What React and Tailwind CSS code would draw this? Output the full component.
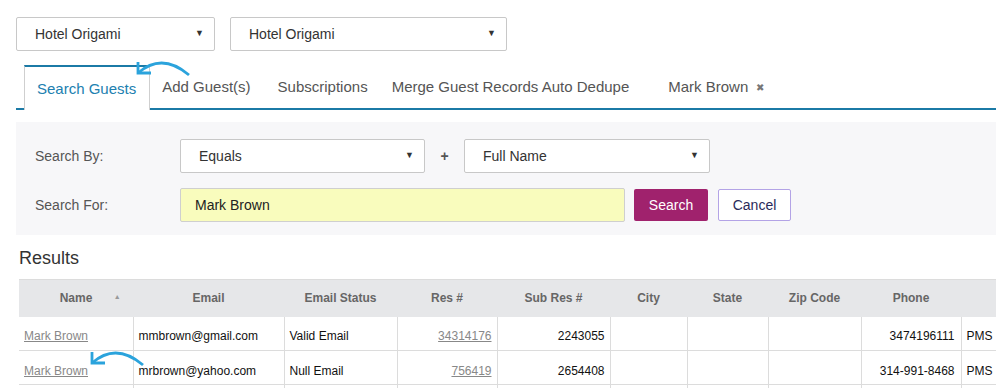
import React from 'react';

const FakeSelect = ({ value, className }) => (
  <div className={`flex items-center justify-between bg-white border border-[#c8c8c8] rounded-[2px] h-[34px] pl-[18px] pr-[10px] text-[14px] text-[#333] ${className}`}>
    <span>{value}</span>
    <span className="text-[9px] text-[#333]">▼</span>
  </div>
);

const Arrow = ({ className }) => (
  <svg className={`absolute pointer-events-none ${className}`} width="60" height="22" viewBox="0 0 60 22" fill="none">
    <path d="M2 12 Q 26 -9 53 14" stroke="#2ba3dc" strokeWidth="2.8" fill="none" />
    <path d="M2 1 L2 12 L15 12" stroke="#2ba3dc" strokeWidth="2.8" fill="none" />
  </svg>
);

const cols = [
  { label: 'Name', w: 'w-[114px]' },
  { label: 'Email', w: 'w-[151px]' },
  { label: 'Email Status', w: 'w-[113px]' },
  { label: 'Res #', w: 'w-[100px]' },
  { label: 'Sub Res #', w: 'w-[113px]' },
  { label: 'City', w: 'w-[77px]' },
  { label: 'State', w: 'w-[81px]' },
  { label: 'Zip Code', w: 'w-[93px]' },
  { label: 'Phone', w: 'w-[100px]' },
  { label: '', w: 'w-[60px]' },
];

const rows = [
  { name: 'Mark Brown', email: 'mmbrown@gmail.com', status: 'Valid Email', res: '34314176', sub: '2243055', phone: '3474196111', src: 'PMS' },
  { name: 'Mark Brown', email: 'mrbrown@yahoo.com', status: 'Null Email', res: '756419', sub: '2654408', phone: '314-991-8468', src: 'PMS' },
  { name: '', email: '', status: '', res: '', sub: '', phone: '', src: '' },
];

export default function App() {
  return (
    <div className="relative w-[996px] h-[388px] overflow-hidden bg-white font-['Liberation_Sans',Arial,sans-serif]">
      {/* property selects */}
      <div className="flex gap-[15px] pl-4 pt-[17px]">
        <FakeSelect value="Hotel Origami" className="w-[199px]" />
        <FakeSelect value="Hotel Origami" className="w-[277px]" />
      </div>

      {/* tabs */}
      <div className="ml-4 mt-[14px] flex items-end border-b-2 border-[#1b7aa6] h-[45px] text-[15px] text-[#555]">
        <div className="ml-2 -mb-[2px] h-[45px] flex items-center pl-[12px] pr-[13px] pt-[2px] bg-white border-t-2 border-t-[#1b7aa6] border-x border-x-[#cfcfcf] text-[#2180b0]">
          Search Guests
        </div>
        <div className="h-[43px] flex items-center pt-[2px] ml-[12px]">Add Guest(s)</div>
        <div className="h-[43px] flex items-center pt-[2px] ml-[27px]">Subscriptions</div>
        <div className="h-[43px] flex items-center pt-[2px] ml-[24px]">Merge Guest Records Auto Dedupe</div>
        <div className="h-[43px] flex items-center pt-[2px] ml-[39px]">
          Mark Brown
          <span className="ml-[8px] text-[10px] text-[#777]">✖</span>
        </div>
      </div>

      {/* search panel */}
      <div className="ml-4 mt-[12px] bg-[#f7f7f9] h-[113px] pl-[19px] pt-[17px] flex flex-col gap-[15px]">
        <div className="flex items-center">
          <div className="w-[145px] text-[14px] text-[#555]">Search By:</div>
          <FakeSelect value="Equals" className="w-[245px]" />
          <div className="w-[39px] text-center text-[14px] font-bold text-[#555]">+</div>
          <FakeSelect value="Full Name" className="w-[246px]" />
        </div>
        <div className="flex items-center">
          <div className="w-[145px] text-[14px] text-[#555]">Search For:</div>
          <div className="w-[445px] h-[34px] flex items-center pl-[14px] bg-[#f9fcbd] border border-[#cfcfcf] rounded-[2px] text-[14px] text-[#222]">
            Mark Brown
          </div>
          <button className="ml-[9px] w-[74px] h-[32px] bg-[#a0226d] rounded-[2px] text-[14px] text-white">
            Search
          </button>
          <button className="ml-[10px] w-[73px] h-[32px] bg-white border border-[#b3a3e6] rounded-[2px] text-[14px] text-[#2a2a5a]">
            Cancel
          </button>
        </div>
      </div>

      {/* results */}
      <div className="ml-[19px] mt-[10px] text-[18px] text-[#333]">Results</div>
      <table className="ml-[19px] mt-[7px] border-collapse text-[12px] table-fixed w-[1002px]">
        <thead>
          <tr className="bg-[#e6e7e9] h-[37px] border-t border-[#dcdcdc]">
            {cols.map((c, i) => (
              <th key={i} className={`${c.w} font-bold text-[#666] text-center`}>
                {i === 0 ? (
                  <span className="relative inline-block">
                    Name
                    <span className="absolute left-[54px] top-[3px] text-[7px] text-[#999]">▲</span>
                  </span>
                ) : (
                  c.label
                )}
              </th>
            ))}
          </tr>
        </thead>
        <tbody>
          {rows.map((r, i) => (
            <tr key={i} className="h-[34px] border-b border-[#dcdcdc] [&>td]:pt-[6px]">
              <td className="px-[5px]">
                <a className="text-[#888] underline">{r.name}</a>
              </td>
              <td className="border-l border-[#dcdcdc] px-[5px] text-[#111]">{r.email}</td>
              <td className="border-l border-[#dcdcdc] px-[5px] text-[#111]">{r.status}</td>
              <td className="border-l border-[#dcdcdc] px-[5px] text-right">
                <a className="text-[#888] underline">{r.res}</a>
              </td>
              <td className="border-l border-[#dcdcdc] px-[5px] text-right text-[#111]">{r.sub}</td>
              <td className="border-l border-[#dcdcdc]"></td>
              <td className="border-l border-[#dcdcdc]"></td>
              <td className="border-l border-[#dcdcdc]"></td>
              <td className="border-l border-[#dcdcdc] px-[6px] text-right text-[#111]">{r.phone}</td>
              <td className="border-l border-[#dcdcdc] px-[5px] text-[#111]">{r.src}</td>
            </tr>
          ))}
        </tbody>
      </table>

      <Arrow className="left-[136px] top-[61px]" />
      <Arrow className="left-[90px] top-[351px]" />
    </div>
  );
}
